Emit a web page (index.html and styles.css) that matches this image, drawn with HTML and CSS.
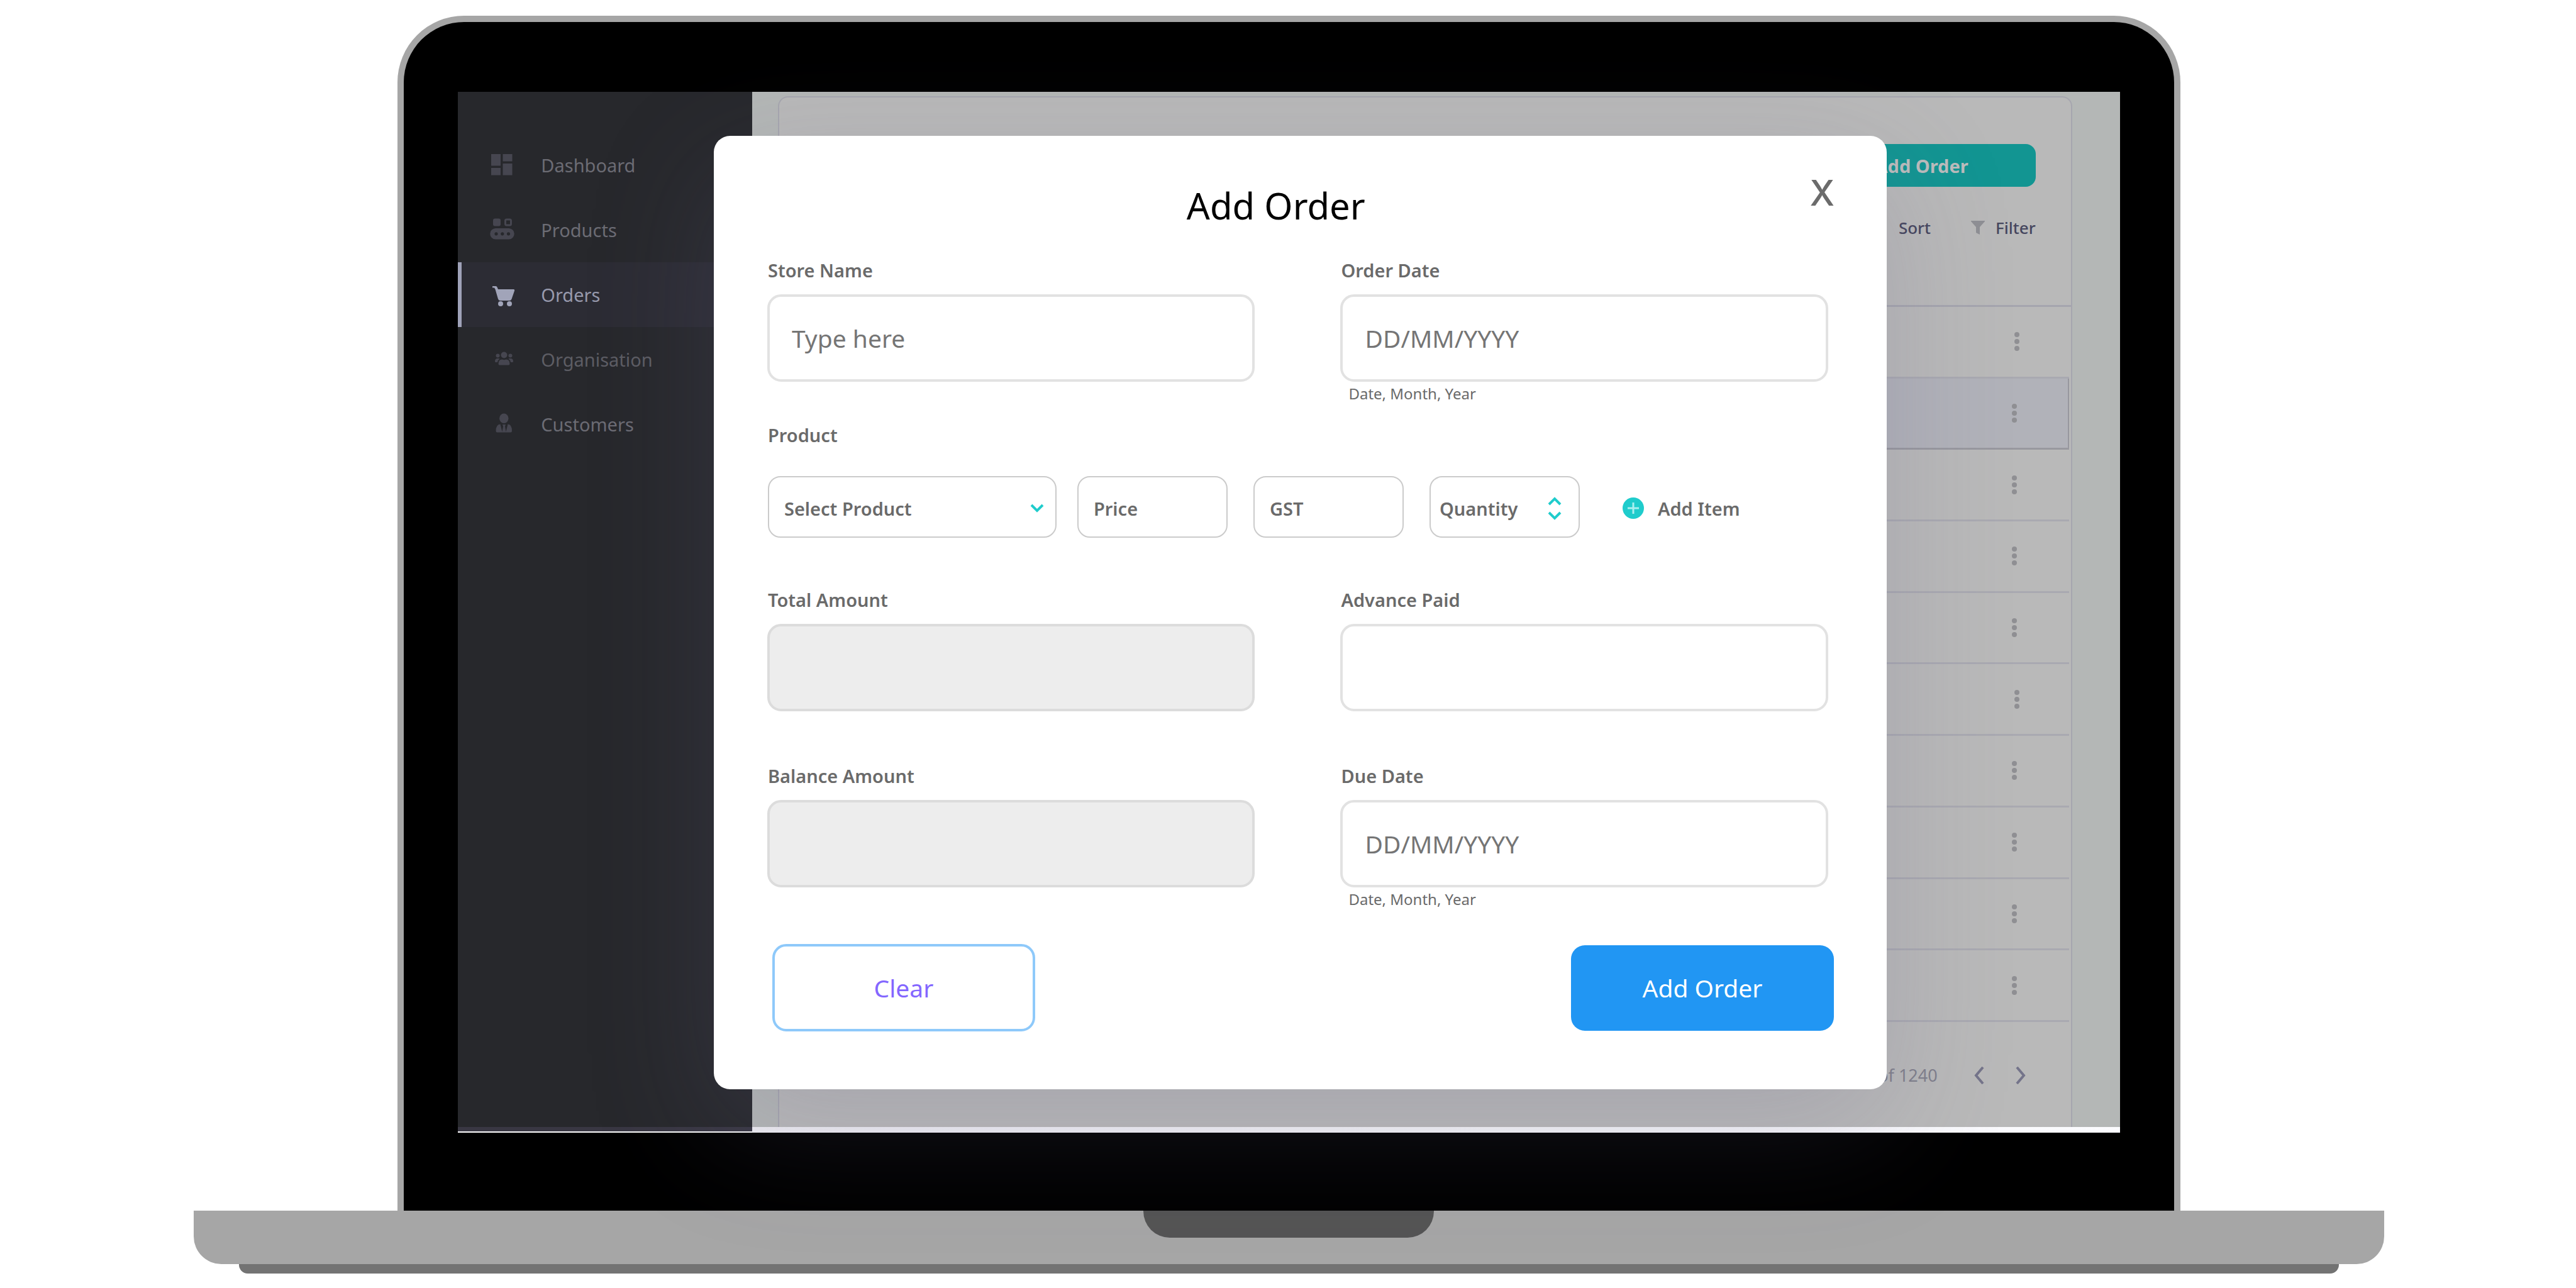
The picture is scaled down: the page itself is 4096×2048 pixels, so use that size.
FILE: index.html
```html
<!DOCTYPE html>
<html lang="en">
<head>
  <meta charset="utf-8">
  <meta name="viewport" content="width=device-width, initial-scale=1">
  <title>Add Order</title>
  <link rel="stylesheet" href="styles.css">
</head>
<body>
  <div class="laptop">
    <div class="lid">
      <div class="screen">
        <div class="app">
          <nav class="sidebar" aria-label="Main">
            <a class="nav-item" href="#dashboard">
              <svg class="nav-icon" viewBox="0 0 44 44" aria-hidden="true"><path d="M5 4h15v18.500H5zM5 26h15v11.500H5zM23.500 4h15v11.500h-15zM23.500 19h15v18.500h-15z"/></svg>
              Dashboard
            </a>
            <a class="nav-item" href="#products">
              <svg class="nav-icon" viewBox="0 0 44 44" aria-hidden="true"><rect x="8" y="3.500" width="12" height="12" rx="3"/><rect x="27.500" y="5" width="9" height="9" rx="2" fill="none" stroke="currentColor" stroke-width="3"/><path fill-rule="evenodd" d="M12 19h21a8.700 8.700 0 0 1 0 17.500H12a8.700 8.700 0 0 1 0-17.500zM13 25.200a2.600 2.600 0 1 0 0 5.200 2.600 2.600 0 0 0 0-5.200zM22.800 25.200a2.600 2.600 0 1 0 0 5.200 2.600 2.600 0 0 0 0-5.200zM32.500 25.200a2.600 2.600 0 1 0 0 5.200 2.600 2.600 0 0 0 0-5.200z"/></svg>
              Products
            </a>
            <a class="nav-item nav-item-active" href="#orders" aria-current="page">
              <svg class="nav-icon" viewBox="0 0 44 44" aria-hidden="true"><path d="M7 8h5.500q1.500 0 2 1.500L16 13h24.500q2.300 0 1.500 2.500L37.500 28.500Q36.500 31 34 31H19.500q-2.500 0-3.500-2.500L11.500 13 10 10.500H7z"/><circle cx="20" cy="36" r="4"/><circle cx="34" cy="36" r="4"/></svg>
              Orders
            </a>
            <a class="nav-item nav-item-faint" href="#organisation">
              <svg class="nav-icon" viewBox="0 0 44 44" aria-hidden="true"><circle cx="25.500" cy="14.500" r="5"/><circle cx="15.500" cy="15.500" r="3"/><circle cx="35.500" cy="15.500" r="3"/><path d="M16.500 28.500q0-7 6-7 3 1.300 6 0 6 0 6 7 0 2-2 2h-14q-2 0-2-2zM11 24.500q0-4.500 4-4.500h2.500l1 .8q-3 1.500-3.500 5.200h-3q-1 0-1-1.500zM40 24.500q0-4.500-4-4.500h-2.500l-1 .8q3 1.500 3.500 5.200h3q1 0 1-1.500z"/></svg>
              Organisation
            </a>
            <a class="nav-item" href="#customers">
              <svg class="nav-icon" viewBox="0 0 44 44" aria-hidden="true"><ellipse cx="25.300" cy="12.300" rx="7.200" ry="7.700"/><path d="M12.500 32q0-10 7-10.500l3 12 1.500-8.500-1-3h5l-1 3 1.500 8.500 3-12q6.500.5 6.500 10.500 0 2.500-2 2.500H14.500q-2 0-2-2.500z"/></svg>
              Customers
            </a>
          </nav>
          <main class="main">
            <section class="panel" aria-label="Orders">
              <div class="panel-head">
                <button class="panel-add" type="button">Add Order</button>
                <div class="tools">
                  <button class="tool" type="button">Sort</button>
                  <button class="tool" type="button">
                    <svg class="tool-icon" viewBox="0 0 22 22" aria-hidden="true"><path d="M0 0h22v1l-8 9v12l-6-3v-9L0 1z"/></svg>
                    Filter
                  </button>
                </div>
              </div>
              <table class="orders" aria-label="Order list">
                <tbody>
                  <tr><td class="cell cell-wide"><button class="kebab" type="button" aria-label="Row menu"><svg class="kebab-icon" viewBox="0 0 24 32"><circle cx="12" cy="5" r="4"/><circle cx="12" cy="16" r="4"/><circle cx="12" cy="27" r="4"/></svg></button></td></tr>
                  <tr class="row-selected"><td class="cell"><button class="kebab" type="button" aria-label="Row menu"><svg class="kebab-icon" viewBox="0 0 24 32"><circle cx="12" cy="5" r="4"/><circle cx="12" cy="16" r="4"/><circle cx="12" cy="27" r="4"/></svg></button></td></tr>
                  <tr><td class="cell"><button class="kebab" type="button" aria-label="Row menu"><svg class="kebab-icon" viewBox="0 0 24 32"><circle cx="12" cy="5" r="4"/><circle cx="12" cy="16" r="4"/><circle cx="12" cy="27" r="4"/></svg></button></td></tr>
                  <tr><td class="cell"><button class="kebab" type="button" aria-label="Row menu"><svg class="kebab-icon" viewBox="0 0 24 32"><circle cx="12" cy="5" r="4"/><circle cx="12" cy="16" r="4"/><circle cx="12" cy="27" r="4"/></svg></button></td></tr>
                  <tr><td class="cell"><button class="kebab" type="button" aria-label="Row menu"><svg class="kebab-icon" viewBox="0 0 24 32"><circle cx="12" cy="5" r="4"/><circle cx="12" cy="16" r="4"/><circle cx="12" cy="27" r="4"/></svg></button></td></tr>
                  <tr><td class="cell cell-wide"><button class="kebab" type="button" aria-label="Row menu"><svg class="kebab-icon" viewBox="0 0 24 32"><circle cx="12" cy="5" r="4"/><circle cx="12" cy="16" r="4"/><circle cx="12" cy="27" r="4"/></svg></button></td></tr>
                  <tr><td class="cell"><button class="kebab" type="button" aria-label="Row menu"><svg class="kebab-icon" viewBox="0 0 24 32"><circle cx="12" cy="5" r="4"/><circle cx="12" cy="16" r="4"/><circle cx="12" cy="27" r="4"/></svg></button></td></tr>
                  <tr><td class="cell"><button class="kebab" type="button" aria-label="Row menu"><svg class="kebab-icon" viewBox="0 0 24 32"><circle cx="12" cy="5" r="4"/><circle cx="12" cy="16" r="4"/><circle cx="12" cy="27" r="4"/></svg></button></td></tr>
                  <tr><td class="cell"><button class="kebab" type="button" aria-label="Row menu"><svg class="kebab-icon" viewBox="0 0 24 32"><circle cx="12" cy="5" r="4"/><circle cx="12" cy="16" r="4"/><circle cx="12" cy="27" r="4"/></svg></button></td></tr>
                  <tr><td class="cell"><button class="kebab" type="button" aria-label="Row menu"><svg class="kebab-icon" viewBox="0 0 24 32"><circle cx="12" cy="5" r="4"/><circle cx="12" cy="16" r="4"/><circle cx="12" cy="27" r="4"/></svg></button></td></tr>
                </tbody>
              </table>
              <div class="pager">
                <span class="pager-count">of 1240</span>
                <button class="pager-button" type="button" aria-label="Previous page"><svg class="pager-icon" viewBox="0 0 16 28"><path d="M14 1L3 14l11 13"/></svg></button>
                <button class="pager-button" type="button" aria-label="Next page"><svg class="pager-icon" viewBox="0 0 16 28"><path d="M2 1l11 13L2 27"/></svg></button>
              </div>
            </section>
          </main>
        </div>
        <div class="strip"><div class="strip-side"></div><div class="strip-main"></div></div>

        <dialog class="modal" open aria-labelledby="modal-title">
          <form class="form">
            <header class="modal-head">
              <h1 class="modal-title" id="modal-title">Add Order</h1>
              <button class="modal-close" type="button" aria-label="Close">X</button>
            </header>

            <div class="fields">
              <div class="field">
                <label class="label" for="store">Store Name</label>
                <input class="input" id="store" type="text" placeholder="Type here">
              </div>
              <div class="field">
                <label class="label" for="order-date">Order Date</label>
                <input class="input" id="order-date" type="text" placeholder="DD/MM/YYYY">
                <span class="hint">Date, Month, Year</span>
              </div>
            </div>

            <div class="product">
              <label class="label" for="product">Product</label>
              <div class="product-row">
                <div class="product-pair">
                  <div class="select-box">
                    <select class="select" id="product"><option>Select Product</option></select>
                    <svg class="select-arrow" viewBox="0 0 22 14" aria-hidden="true"><path d="M2 2l9 9 9-9"/></svg>
                  </div>
                  <input class="small-input" type="text" placeholder="Price" aria-label="Price">
                </div>
                <input class="small-input" type="text" placeholder="GST" aria-label="GST">
                <div class="quantity">
                  <input class="quantity-input" type="text" placeholder="Quantity" aria-label="Quantity">
                  <div class="stepper">
                    <button class="step" type="button" aria-label="More"><svg class="step-icon" viewBox="0 0 22 14"><path d="M2 12l9-9 9 9"/></svg></button>
                    <button class="step" type="button" aria-label="Less"><svg class="step-icon" viewBox="0 0 22 14"><path d="M2 2l9 9 9-9"/></svg></button>
                  </div>
                </div>
                <button class="add-item" type="button">
                  <svg class="add-icon" viewBox="0 0 34 34" aria-hidden="true"><circle cx="17" cy="17" r="17" fill="#1fcccc"/><path d="M17 8v18M8 17h18" stroke="#a9efef" stroke-width="3"/></svg>
                  Add Item
                </button>
              </div>
            </div>

            <div class="fields">
              <div class="field">
                <label class="label" for="total">Total Amount</label>
                <input class="input input-locked" id="total" type="text" readonly>
              </div>
              <div class="field">
                <label class="label" for="advance">Advance Paid</label>
                <input class="input" id="advance" type="text">
              </div>
            </div>

            <div class="fields fields-last">
              <div class="field">
                <label class="label" for="balance">Balance Amount</label>
                <input class="input input-locked" id="balance" type="text" readonly>
              </div>
              <div class="field">
                <label class="label" for="due-date">Due Date</label>
                <input class="input" id="due-date" type="text" placeholder="DD/MM/YYYY">
                <span class="hint">Date, Month, Year</span>
              </div>
            </div>

            <div class="actions">
              <button class="button button-clear" type="reset">Clear</button>
              <button class="button button-submit" type="button">Add Order</button>
            </div>
          </form>
        </dialog>
      </div>
    </div>
    <div class="base"><div class="notch"></div></div>
    <div class="foot"></div>
  </div>
</body>
</html>
```
FILE: styles.css
```css
*,
*::before,
*::after {
  box-sizing: border-box;
}

body {
  margin: 0;
  background: #fff;
  font-family: "Noto Sans", "Open Sans", sans-serif;
}

button,
input,
select {
  margin: 0;
  padding: 0;
  border: 0;
  background: none;
  font: inherit;
  color: inherit;
}

/* Laptop */
.laptop {
  display: flex;
  flex-direction: column;
  align-items: center;
  padding: 25px 0 23px 3px;
}

.lid {
  width: 69.25%;
  padding: 111px 86px 124px;
  border: 10px solid #a6a6a6;
  border-bottom: 0;
  border-radius: 106px 106px 0 0;
  background: #000;
}

.base {
  display: flex;
  justify-content: center;
  width: 85.1%;
  height: 85px;
  border-radius: 0 0 44px 44px;
  background: #a6a6a6;
}

.notch {
  width: 462px;
  height: 43px;
  border-radius: 0 0 42px 42px;
  background: #545454;
}

.foot {
  width: 81.6%;
  height: 15px;
  border-radius: 0 0 14px 14px;
  background: #737373;
}

/* Screen: the modal is stacked over the app */
.screen {
  display: grid;
  grid-template-columns: 100%;
  grid-template-rows: auto 9px;
}

.app,
.strip {
  display: grid;
  grid-template-columns: 468px 1fr;
}

.app {
  grid-area: 1 / 1;
}

.strip {
  grid-area: 2 / 1;
}

.strip-side {
  border-bottom: 2px solid #fff;
  background: #393743;
}

.strip-main {
  background: linear-gradient(90deg, #efeef3, #fbfbfe);
}

/* Sidebar */
.sidebar {
  padding-top: 65px;
  background: #27282c;
}

.nav-item {
  display: flex;
  align-items: center;
  gap: 40px;
  height: 103px;
  padding-left: 42px;
  border-left: 6px solid transparent;
  font-size: 29px;
  line-height: 40px;
  color: #6c6c74;
  text-decoration: none;
}

.nav-item-faint {
  color: #5d5d64;
}

.nav-item-active {
  border-left-color: #9fa2b8;
  background: #2c2c34;
  color: #989aad;
}

.nav-icon {
  width: 44px;
  height: 44px;
  color: #464650;
  fill: currentColor;
}

.nav-item-active .nav-icon {
  color: #a1a4b9;
}

/* Orders panel */
.main {
  display: flex;
  padding: 7px 76px 0 41px;
  background: #b4b7b6;
}

.panel {
  flex: 1;
  border: 2px solid #a6a6af;
  border-bottom: 0;
  border-radius: 16px 16px 0 0;
  background: #b9b9b9;
}

.panel-head {
  display: flex;
  flex-direction: column;
  align-items: flex-end;
  gap: 45px;
  padding: 74px 56px 103px;
}

.panel-add {
  height: 68px;
  padding: 0 107px;
  border-radius: 16px;
  background: #129592;
  font-size: 29px;
  font-weight: 700;
  color: #bcbcbc;
}

.tools {
  display: flex;
  gap: 64px;
}

.tool {
  display: flex;
  align-items: center;
  gap: 17px;
  font-size: 26px;
  font-weight: 500;
  line-height: 40px;
  color: #45465e;
}

.tool-icon {
  width: 22px;
  height: 22px;
  fill: #8e8f94;
}

.orders {
  width: 100%;
  height: 1140px;
  padding-right: 3px;
  border-top: 3px solid #a5a5ae;
  border-collapse: separate;
  border-spacing: 0;
}

.cell {
  height: 113px;
  padding: 0 75px 0 0;
  border-bottom: 3px solid #a9a9b1;
  text-align: right;
}

.cell-wide {
  padding-right: 71px;
}

.row-selected .cell {
  padding-right: 73px;
  border-right: 2px solid #98989f;
  border-bottom-color: #98989f;
  background: #b1b2b9;
}

.kebab {
  width: 24px;
  height: 32px;
  vertical-align: middle;
}

.kebab-icon {
  display: block;
  width: 24px;
  height: 32px;
  fill: #8f8f93;
}

.pager {
  display: flex;
  align-items: center;
  justify-content: flex-end;
  padding: 65px 72px 62px 0;
  font-size: 27px;
  line-height: 40px;
  color: #80808c;
}

.pager-count {
  margin-right: 58px;
}

.pager-button {
  width: 16px;
  height: 28px;
}

.pager-button + .pager-button {
  margin-left: 50px;
}

.pager-icon {
  display: block;
  width: 16px;
  height: 28px;
  fill: none;
  stroke: #74748a;
  stroke-width: 4;
}

/* Modal */
.modal {
  grid-area: 1 / 1;
  position: relative;
  z-index: 1;
  align-self: start;
  inset: auto;
  width: 70.58%;
  margin: 70px 0 0 15.39%;
  padding: 0;
  border: 0;
  border-radius: 26px;
  background: #fff;
  box-shadow: 0 60px 200px rgba(100, 95, 130, 0.22);
  color: #6a6a6a;
}

.form {
  padding: 51px 0 92px;
}

.modal-head {
  display: flex;
  gap: 40px;
  align-items: flex-start;
  padding: 0 83px 0 85px;
}

.modal-title {
  flex: 1;
  margin: 20px 0 0;
  font-size: 58px;
  font-weight: 400;
  line-height: 80px;
  text-align: center;
  color: #000;
}

.modal-close {
  font-family: Inter, sans-serif;
  font-size: 56px;
  font-weight: 500;
  line-height: 80px;
  color: #6b6b6b;
}

.fields {
  display: grid;
  grid-template-columns: 1fr 1fr;
  gap: 136px;
  align-items: start;
  padding: 43px 93px 0 85px;
}

.fields-last {
  padding-top: 83px;
}

.field {
  display: flex;
  flex-direction: column;
}

.label {
  padding-left: 1px;
  font-size: 29px;
  font-weight: 600;
  line-height: 40px;
}

.input {
  width: 100%;
  height: 139px;
  margin-top: 18px;
  padding: 0 35px;
  border: 4px solid #e2e2e2;
  border-radius: 22px;
  background: #fff;
  font-size: 39px;
}

.input-locked {
  border-color: #dcdcdc;
  background: #ededed;
}

.input::placeholder {
  color: #757575;
  opacity: 1;
}

.hint {
  margin-top: 3px;
  padding-left: 13px;
  font-size: 24px;
  line-height: 32px;
}

.product {
  display: flex;
  flex-direction: column;
  gap: 45px;
  padding: 30px 93px 36px 86px;
}

.product .label {
  padding-left: 0;
}

.product-row {
  display: flex;
  gap: 41px;
  align-items: center;
  font-size: 29px;
  font-weight: 600;
}

.product-pair {
  display: flex;
  gap: 33px;
}

.select-box {
  position: relative;
  width: 459px;
}

.select,
.small-input,
.quantity {
  height: 98px;
  border: 2px solid #cbcbcb;
  border-radius: 20px;
  background: #fff;
}

.select {
  width: 100%;
  padding: 4px 24px 0;
  appearance: none;
}

.select-arrow {
  position: absolute;
  top: 44px;
  right: 20px;
  width: 22px;
  height: 14px;
  fill: none;
  stroke: #1fcccc;
  stroke-width: 4;
  pointer-events: none;
}

.small-input,
.quantity {
  width: 239px;
}

.small-input {
  padding: 4px 24px 0;
}

.small-input::placeholder,
.quantity-input::placeholder {
  color: #6a6a6a;
  opacity: 1;
}

.quantity {
  display: flex;
  align-items: center;
  padding: 4px 27px 0 14px;
}

.quantity-input {
  flex: 1;
  min-width: 0;
}

.stepper {
  display: flex;
  flex-direction: column;
  gap: 9px;
}

.step {
  width: 22px;
  height: 14px;
}

.step-icon {
  display: block;
  width: 22px;
  height: 14px;
  fill: none;
  stroke: #1fcccc;
  stroke-width: 4;
}

.add-item {
  display: flex;
  align-items: center;
  gap: 22px;
  margin-left: 27px;
  padding-top: 4px;
}

.add-icon {
  width: 34px;
  height: 34px;
}

.actions {
  display: flex;
  align-items: center;
  justify-content: space-between;
  padding: 55px 84px 0 93px;
}

.button {
  width: 418px;
  height: 136px;
  border-radius: 22px;
  font-size: 39px;
}

.button-clear {
  height: 139px;
  border: 4px solid #8ec9fa;
  color: #8467ff;
}

.button-submit {
  background: #2196f3;
  color: #fff;
}
```
